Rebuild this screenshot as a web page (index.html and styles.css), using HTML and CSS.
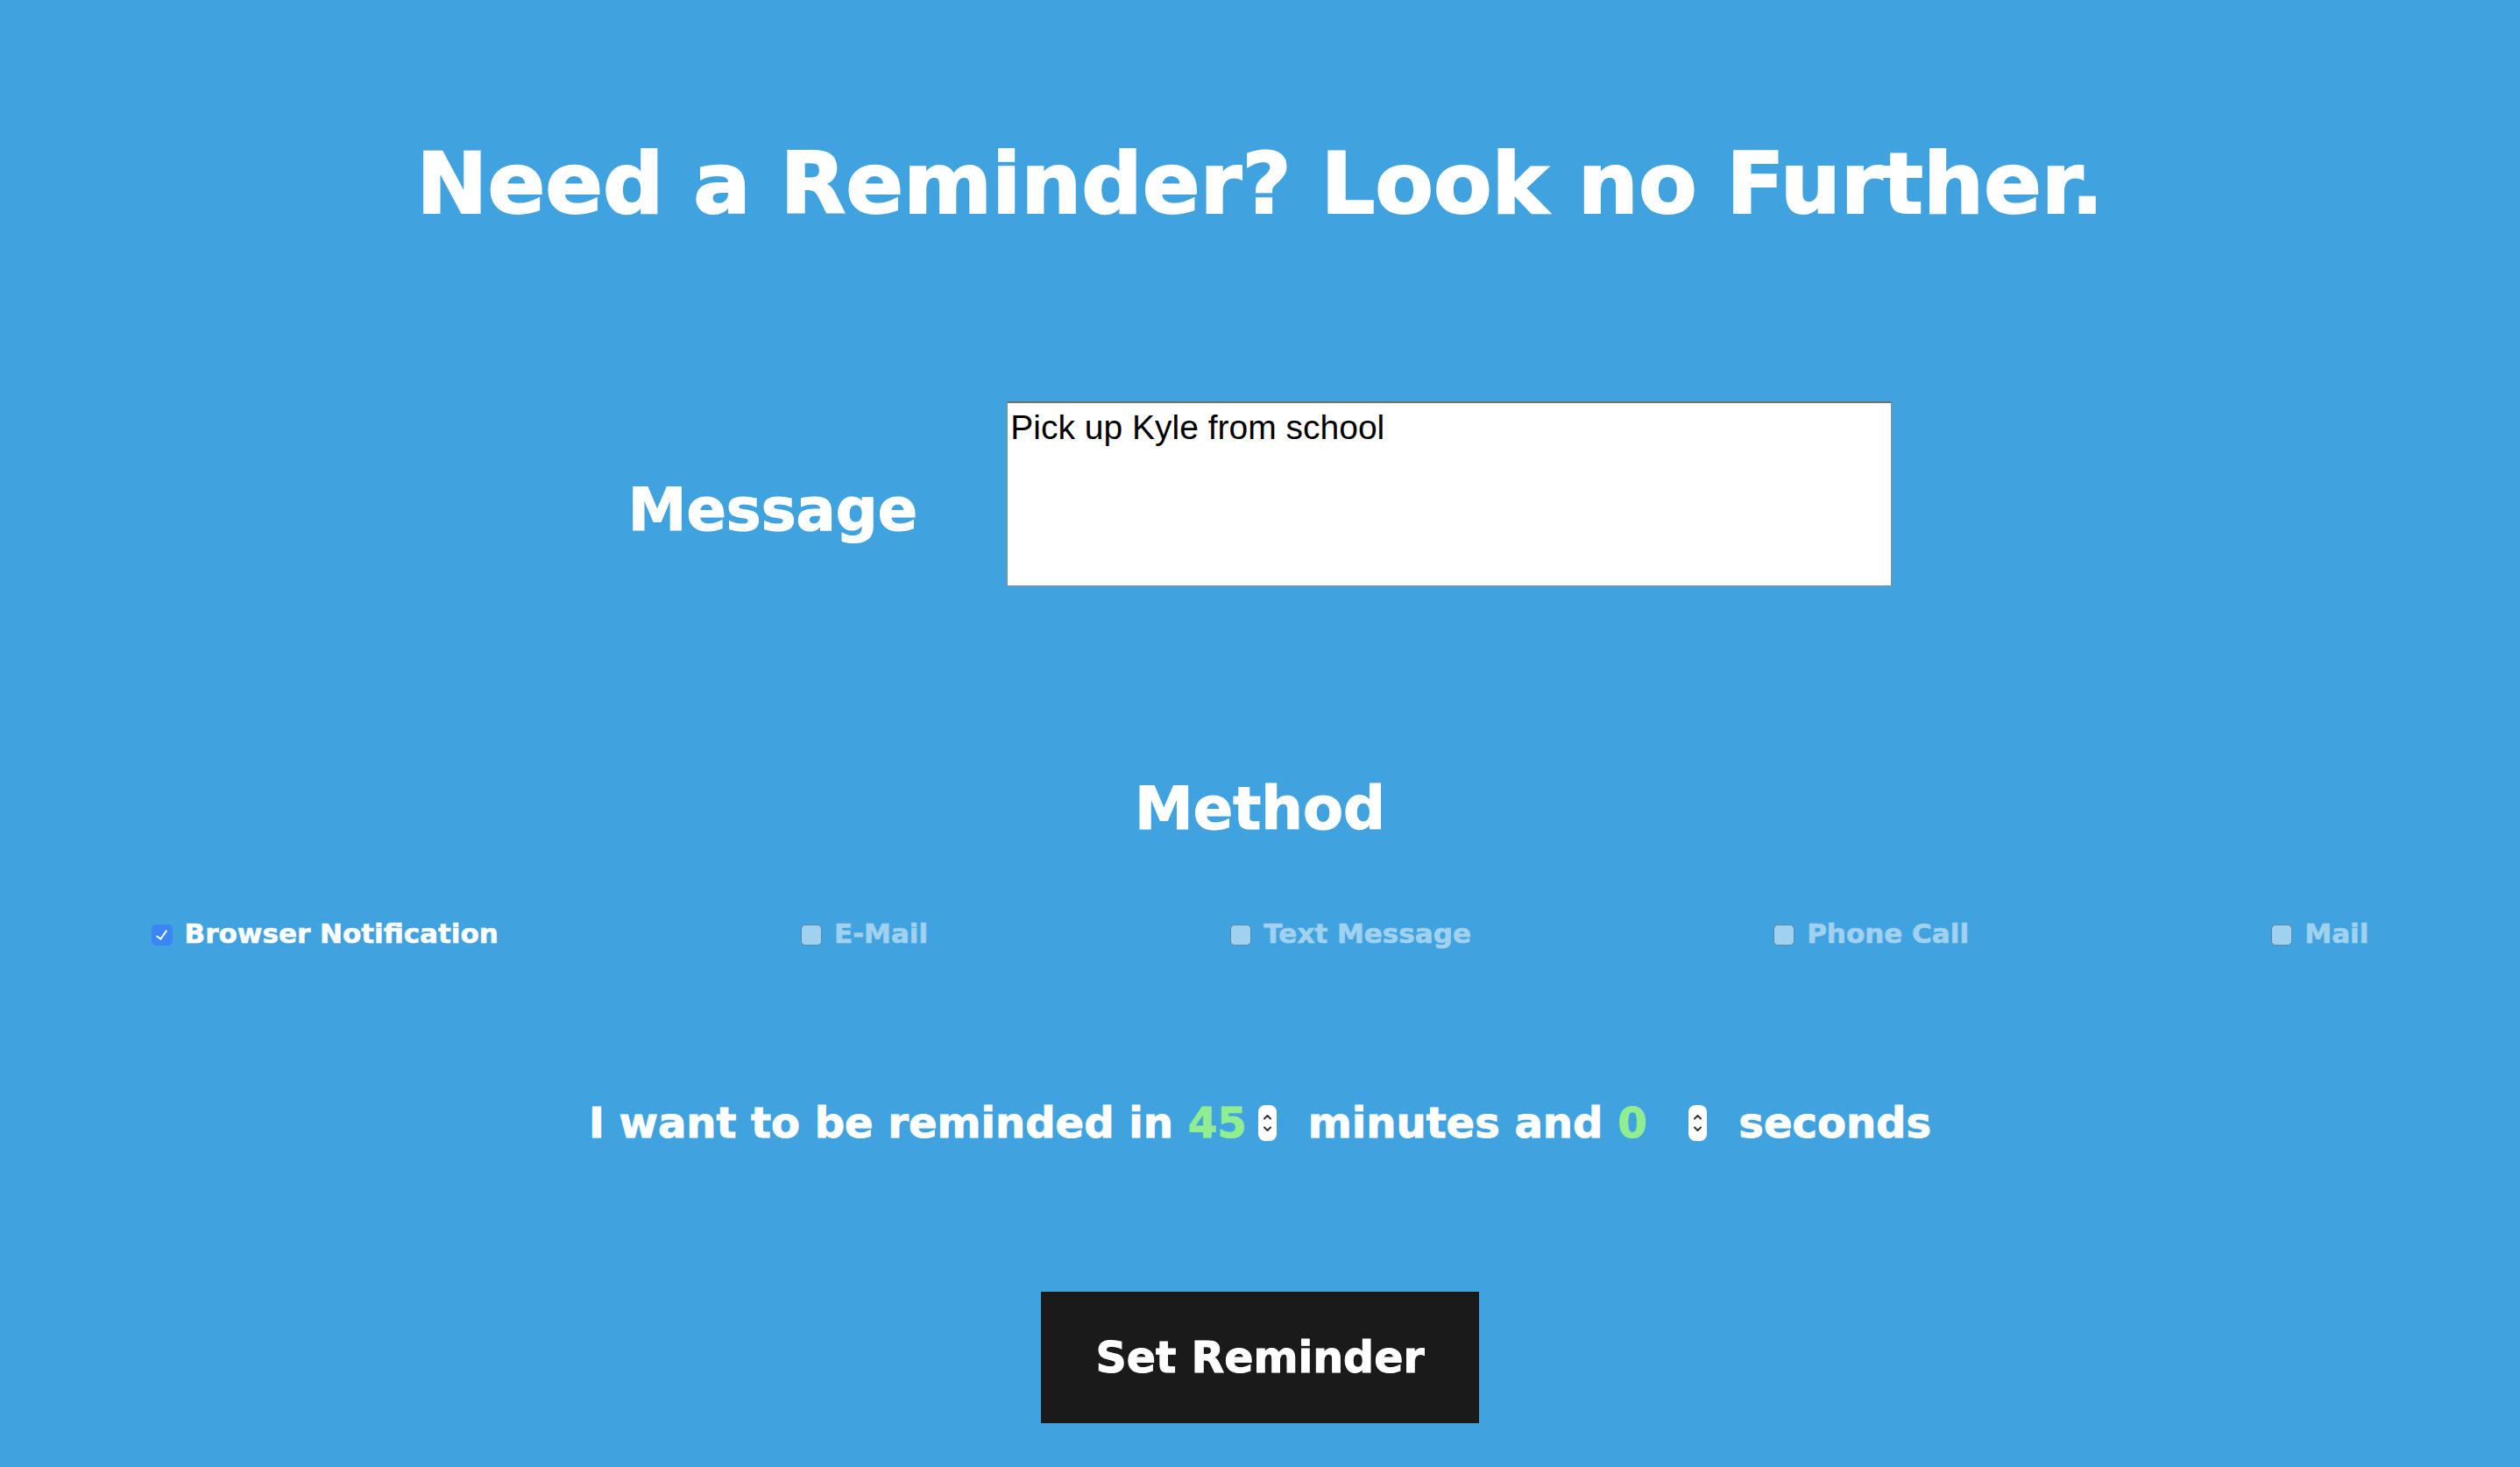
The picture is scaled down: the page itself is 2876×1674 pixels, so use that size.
FILE: index.html
```html
<!DOCTYPE html>
<html lang="en">
<head>
<meta charset="utf-8">
<title>Reminder</title>
<link rel="stylesheet" href="styles.css">
</head>
<body>
<main class="page">
  <h1 class="title">Need a Reminder? Look no Further.</h1>

  <section class="message-row">
    <label class="message-label" for="msg">Message</label>
    <textarea id="msg" class="message-box">Pick up Kyle from school</textarea>
  </section>

  <h2 class="method-title">Method</h2>

  <div class="methods">
    <label class="method checked"><input type="checkbox" class="box" checked><span>Browser Notification</span></label>
    <label class="method off"><input type="checkbox" class="box"><span>E-Mail</span></label>
    <label class="method off"><input type="checkbox" class="box"><span>Text Message</span></label>
    <label class="method off"><input type="checkbox" class="box"><span>Phone Call</span></label>
    <label class="method off"><input type="checkbox" class="box"><span>Mail</span></label>
  </div>

  <p class="timer">
    <span>I want to be reminded in</span>
    <span class="num-field"><input class="num num-min" type="number" value="45"><span class="spin"><svg viewBox="0 0 21 41" width="21" height="41"><path d="M7 15.5 L10.5 12 L14 15.5" /><path d="M7 25.5 L10.5 29 L14 25.5" /></svg></span></span>
    <span>minutes and</span>
    <span class="num-field"><input class="num num-sec" type="number" value="0"><span class="spin"><svg viewBox="0 0 21 41" width="21" height="41"><path d="M7 15.5 L10.5 12 L14 15.5" /><path d="M7 25.5 L10.5 29 L14 25.5" /></svg></span></span>
    <span>seconds</span>
  </p>

  <div class="actions">
    <button class="set-btn" type="button">Set Reminder</button>
  </div>
</main>
</body>
</html>
```

FILE: styles.css
```css
* { box-sizing: border-box; }

html, body {
  margin: 0;
  padding: 0;
  background: #40a3e0;
}

body {
  font-family: "DejaVu Sans", "Liberation Sans", sans-serif;
  font-weight: 700;
  color: #ffffff;
  min-height: 1674px;
}

.page {
  display: flex;
  flex-direction: column;
  align-items: center;
  padding-top: 161px;
}

.title {
  margin: 0;
  font-size: 97px;
  line-height: 1;
  font-weight: 700;
  -webkit-text-stroke: 2px #ffffff;
  white-space: nowrap;
}

.message-row {
  margin-top: 200px;
  display: flex;
  align-items: flex-start;
  gap: 102px;
}

.message-label {
  padding-top: 91px;
  font-size: 67px;
  line-height: 1;
  font-weight: 700;
  -webkit-text-stroke: 1.2px #ffffff;
}

.message-box {
  width: 1010px;
  height: 211px;
  margin: 0;
  padding: 6px 3px 4px;
  border: 1px solid #8d8d8d;
  border-top: 2px solid #6e6e6e;
  background: #ffffff;
  color: #000000;
  font-family: "Liberation Sans", Arial, sans-serif;
  font-weight: 400;
  font-size: 39px;
  line-height: 1.15;
  resize: none;
  outline: none;
}

.method-title {
  margin: 221px 0 0;
  font-size: 67px;
  line-height: 1;
  font-weight: 700;
  -webkit-text-stroke: 1.2px #ffffff;
}

.methods {
  align-self: stretch;
  margin-top: 93px;
  display: flex;
  justify-content: space-around;
  align-items: center;
}

.method {
  display: flex;
  align-items: center;
  gap: 14px;
  font-size: 31px;
  line-height: 1;
  font-weight: 700;
  -webkit-text-stroke: 0.6px #ffffff;
}

.method.off { opacity: 0.5; }

.box {
  -webkit-appearance: none;
  appearance: none;
  margin: 3px 0 0;
  width: 24px;
  height: 24px;
  border-radius: 5px;
  border: 1.5px solid #6f6f6f;
  background: #ffffff;
  position: relative;
  flex: none;
}

.box:checked {
  background: #3a86f7;
  border-color: #3a86f7;
}

.box:checked::after {
  content: "";
  position: absolute;
  left: 7.5px;
  top: 3px;
  width: 5px;
  height: 11px;
  border: solid #ffffff;
  border-width: 0 2.5px 2.5px 0;
  transform: rotate(35deg);
}

.timer {
  margin: 176px 0 0;
  display: flex;
  align-items: center;
  gap: 17px;
  font-size: 48px;
  line-height: 1;
  font-weight: 700;
  -webkit-text-stroke: 1px #ffffff;
  white-space: nowrap;
}

.num-field {
  display: inline-flex;
  align-items: center;
  margin-right: 19px;
}

.num {
  -webkit-appearance: none;
  -moz-appearance: textfield;
  appearance: textfield;
  height: 48px;
  border: 0;
  background: transparent;
  padding: 0;
  margin: 0;
  font-family: "DejaVu Sans", "Liberation Sans", sans-serif;
  font-size: 48px;
  font-weight: 700;
  line-height: 1;
  color: #90ee90;
  -webkit-text-stroke: 1px #90ee90;
  outline: none;
}

.num::-webkit-inner-spin-button,
.num::-webkit-outer-spin-button {
  -webkit-appearance: none;
  margin: 0;
}

.num-min { width: 80px; }
.num-sec { width: 81px; }

.spin {
  display: block;
  width: 21px;
  height: 41px;
  background: #ffffff;
  border-radius: 8px;
}

.spin svg {
  display: block;
  fill: none;
  stroke: #333333;
  stroke-width: 2;
  stroke-linecap: round;
  stroke-linejoin: round;
}

.actions {
  margin-top: 169px;
}

.set-btn {
  display: block;
  width: 500px;
  height: 150px;
  padding: 0;
  border: 0;
  background: #1a1a1a;
  color: #ffffff;
  font-family: "DejaVu Sans", "Liberation Sans", sans-serif;
  font-size: 49px;
  font-weight: 700;
  -webkit-text-stroke: 1px #ffffff;
  cursor: pointer;
}
```
